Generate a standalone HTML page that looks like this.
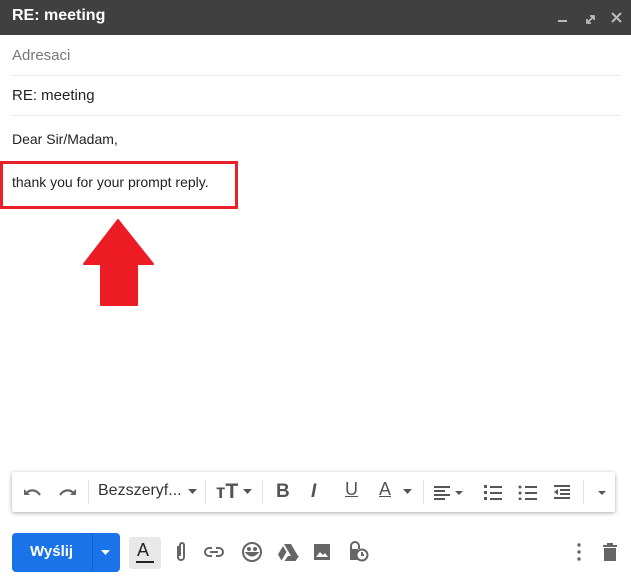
<!DOCTYPE html>
<html><head><meta charset="utf-8"><style>
*{margin:0;padding:0;box-sizing:border-box}
body{width:631px;height:577px;background:#fff;font-family:"Liberation Sans",Arial,sans-serif;position:relative;overflow:hidden}
.hdr{position:absolute;left:0;top:0;width:631px;height:35px;background:#404040;color:#fff;font-weight:bold;font-size:16px;padding:7px 0 0 12px}
.t{position:absolute;white-space:nowrap}
.line{position:absolute;left:10px;right:10px;height:1px;background:#ececec}
.tb{position:absolute;left:12px;top:472px;width:603px;height:40px;background:#fff;box-shadow:0 1px 4px rgba(0,0,0,.35);border-radius:2px}
.sep{position:absolute;top:8px;width:1px;height:24px;background:#e3e3e3}
svg{position:absolute}
</style></head><body>
<div class="hdr">RE: meeting</div>
<svg style="left:555px;top:10px" width="70" height="16" viewBox="0 0 70 16">
<rect x="3" y="10" width="9" height="2" fill="#bbb"/>
<path d="M32 13l7-7M35 6h4v4M32 9v4h4" stroke="#bbb" stroke-width="1.8" fill="none"/>
<path d="M57 3l9 9M66 3l-9 9" stroke="#bbb" stroke-width="2"/>
</svg>
<div class="t" style="left:12px;top:47px;font-size:15px;color:#777">Adresaci</div>
<div class="line" style="top:75px"></div>
<div class="t" style="left:12px;top:87px;font-size:15px;color:#222">RE: meeting</div>
<div class="line" style="top:115px"></div>
<div class="t" style="left:12px;top:131px;font-size:14px;color:#222">Dear Sir/Madam,</div>
<div style="position:absolute;left:0;top:161px;width:238px;height:48px;border:3px solid #e8202a"></div>
<div class="t" style="left:12px;top:174px;font-size:14px;color:#222">thank you for your prompt reply.</div>
<svg style="left:0;top:0" width="200" height="320"><polygon points="118,220 153,264 137,264 137,305 101,305 101,264 84,264" fill="#ed1c24" stroke="#ed1c24" stroke-linejoin="round" stroke-width="2"/></svg>
<div class="tb">
<svg style="left:10px;top:12px" width="60" height="16" viewBox="0 0 60 16"><path d="M4 10c3-5 10-5 14 1" stroke="#666" stroke-width="2.2" fill="none"/><path d="M2 5v6h6z" fill="#666"/><path d="M52 10c-3-5-10-5-14 1" stroke="#666" stroke-width="2.2" fill="none"/><path d="M54 5v6h-6z" fill="#666"/></svg>
<div class="sep" style="left:76px"></div>
<div class="t" style="left:86px;top:10px;font-size:16px;color:#333">Bezszeryf...</div>
<svg style="left:176px;top:17px" width="10" height="6"><path d="M0 0h9l-4.5 5z" fill="#555"/></svg>
<div class="sep" style="left:193px"></div>
<div class="t" style="left:204px;top:8px;font-size:19px;font-weight:bold;color:#555">т<span style="font-size:21px">T</span></div>
<svg style="left:231px;top:17px" width="10" height="6"><path d="M0 0h9l-4.5 5z" fill="#555"/></svg>
<div class="sep" style="left:250px"></div>
<div class="t" style="left:264px;top:9px;font-size:19px;font-weight:bold;color:#555">B</div>
<div class="t" style="left:299px;top:9px;font-size:19px;font-weight:bold;font-style:italic;color:#555">I</div>
<div class="t" style="left:333px;top:7px;font-size:18px;color:#555;text-decoration:underline">U</div>
<div class="t" style="left:367px;top:7px;font-size:18px;color:#555;text-decoration:underline">A</div>
<svg style="left:391px;top:17px" width="10" height="6"><path d="M0 0h9l-4.5 5z" fill="#555"/></svg>
<div class="sep" style="left:411px"></div>
<svg style="left:420px;top:12px" width="180" height="16" viewBox="0 0 180 16" fill="#555">
<rect x="2" y="2" width="16" height="2"/><rect x="2" y="6" width="11" height="2"/><rect x="2" y="10" width="16" height="2"/><rect x="2" y="14" width="11" height="2"/>
<path d="M23 7h8l-4 4z"/>
<rect x="58" y="2" width="12" height="2"/><rect x="58" y="8" width="12" height="2"/><rect x="58" y="14" width="12" height="2"/><rect x="52" y="1" width="3" height="3"/><rect x="52" y="7" width="3" height="3"/><rect x="52" y="13" width="3" height="3"/>
<rect x="93" y="2" width="12" height="2"/><rect x="93" y="8" width="12" height="2"/><rect x="93" y="14" width="12" height="2"/><circle cx="88" cy="3" r="1.5"/><circle cx="88" cy="9" r="1.5"/><circle cx="88" cy="15" r="1.5"/>
<rect x="122" y="1" width="16" height="2"/><rect x="128" y="5" width="10" height="2"/><rect x="128" y="9" width="10" height="2"/><rect x="122" y="13" width="16" height="2"/><path d="M126 5v6l-4-3z"/>
<path d="M166 7h8l-4 4z"/>
</svg>
<div class="sep" style="left:571px"></div>
</div>
<div style="position:absolute;left:12px;top:533px;width:108px;height:39px;background:#1a73e8;border-radius:4px"></div>
<div style="position:absolute;left:92px;top:533px;width:1px;height:39px;background:#1560c4"></div>
<div class="t" style="left:30px;top:543px;font-size:15px;font-weight:bold;color:#fff">Wyślij</div>
<svg style="left:101px;top:550px" width="10" height="6"><path d="M0 0h9l-4.5 5z" fill="#fff"/></svg>
<div style="position:absolute;left:129px;top:537px;width:32px;height:32px;background:#e8e8e8;border-radius:3px"></div>
<div class="t" style="left:137px;top:540px;font-size:18px;color:#222">A</div>
<div style="position:absolute;left:136px;top:561px;width:18px;height:2px;background:#222"></div>
<svg style="left:170px;top:540px" width="280" height="24" viewBox="0 0 280 24" fill="none" stroke="#666" stroke-width="2">
<path d="M8 6v11a3 3 0 0 0 6 0V5a2 2 0 0 0-4 0v11"/>
<path d="M40 12h8M42 8h-3a4 4 0 0 0 0 8h3M46 8h3a4 4 0 0 1 0 8h-3"/>
<circle cx="82" cy="12" r="9"/><circle cx="79" cy="9" r="1" fill="#666"/><circle cx="85" cy="9" r="1" fill="#666"/><path d="M77 13q5 5 10 0z" fill="#666"/>
<g fill="#666" stroke="none"><path d="M114 4h7l7 12h-7z"/><path d="M113 6l3.5 6-5 8.5-3.5-6z"/><path d="M118 16h11l-3.5 5h-11z"/></g>
<rect x="144" y="4" width="16" height="16" fill="#666" stroke="none"/><path d="M146 17l4-5 3 3 2-2 3 4z" fill="#fff" stroke="none"/>
<path d="M181 9v-3a4 4 0 0 1 8 0v3" /><rect x="180" y="9" width="8" height="11" fill="#666" stroke="none"/><circle cx="192" cy="15" r="5.5" fill="#fff"/><path d="M192 12v3h2"/>
</svg>
<svg style="left:570px;top:540px" width="56" height="24" fill="#666"><circle cx="9" cy="5" r="1.7"/><circle cx="9" cy="12" r="1.7"/><circle cx="9" cy="19" r="1.7"/><rect x="33" y="5" width="14" height="2"/><rect x="37" y="3" width="6" height="2"/><path d="M34 8h12v13h-12z"/></svg>
</body></html>
